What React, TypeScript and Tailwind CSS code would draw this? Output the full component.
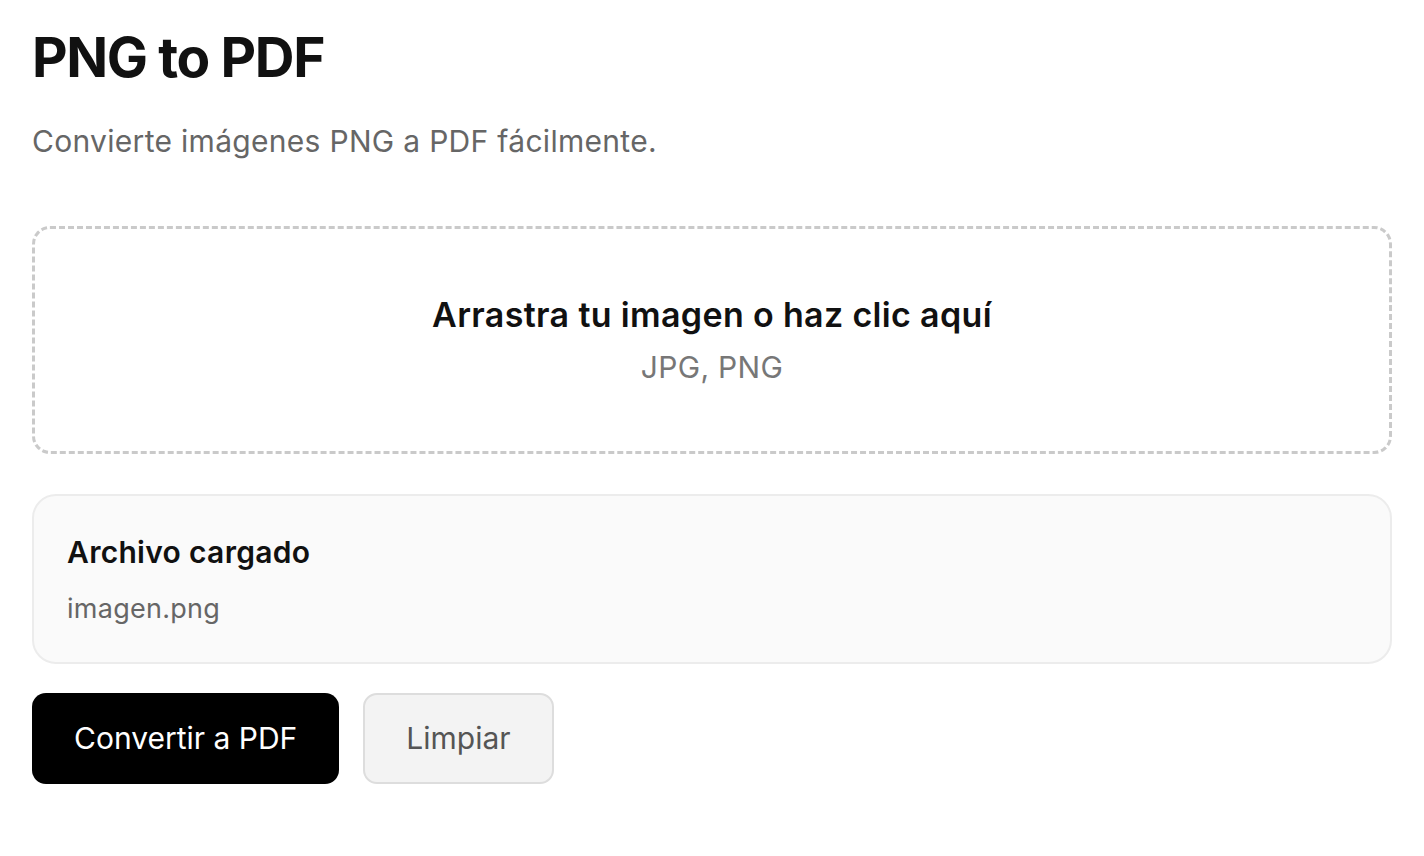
export default function App() {
  return (
    <div className="min-h-screen bg-white px-8 pt-6 font-['Inter',sans-serif] text-[#111]">
      <h1 className="text-[55px] font-bold leading-[1.2] tracking-[-0.025em]">PNG to PDF</h1>
      <p className="mt-[32px] text-[30px] leading-[1.3] tracking-[0.01em] text-[#666]">
        Convierte imágenes PNG a PDF fácilmente.
      </p>

      {/* Dropzone */}
      <div className="mt-[65px] flex h-[228px] cursor-pointer flex-col items-center justify-center rounded-[18px] border-[3px] border-dashed border-[#cacaca] bg-white">
        <p className="text-[34px] font-semibold leading-[1.3] tracking-[0.01em] text-[#111]">
          Arrastra tu imagen o haz clic aquí
        </p>
        <p className="mt-[10px] text-[30px] leading-[1.3] tracking-[0.01em] text-[#777]">JPG, PNG</p>
      </div>

      {/* File info */}
      <div className="mt-[40px] rounded-[24px] border-2 border-[#ececec] bg-[#fafafa] px-[33px] pb-[36px] pt-[37px]">
        <p className="text-[30px] font-semibold leading-[1.3] tracking-[0.01em] text-[#111]">Archivo cargado</p>
        <p className="mt-[19px] text-[27px] leading-[1.3] tracking-[0.01em] text-[#666]">imagen.png</p>
      </div>

      {/* Actions */}
      <div className="mt-[29px] flex gap-6">
        <button type="button" className="h-[91px] rounded-[14px] bg-black px-[42px] text-[30px] text-white">
          Convertir a PDF
        </button>
        <button
          type="button"
          className="h-[91px] rounded-[14px] border-2 border-[#dddddd] bg-[#f3f3f3] px-[41px] text-[30px] text-[#555]"
        >
          Limpiar
        </button>
      </div>
    </div>
  );
}
